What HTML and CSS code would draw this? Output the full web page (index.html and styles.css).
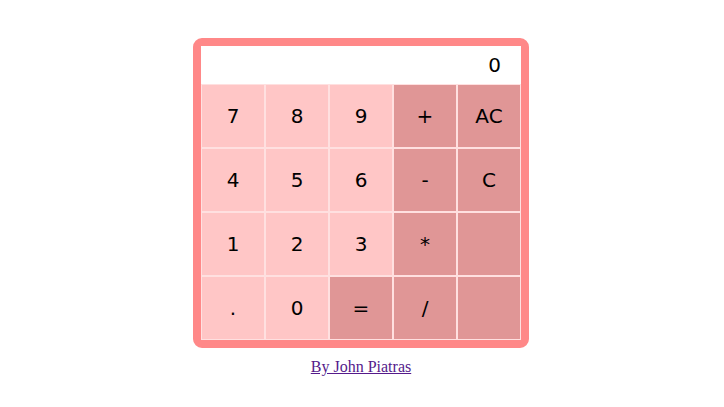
FILE: index.html
```html
<!DOCTYPE html>
<html>
<head>
<meta charset="utf-8">
<link rel="stylesheet" href="styles.css">
</head>
<body>
<div class="calc">
  <div class="display">0</div>
  <div class="keys">
    <div class="key">7</div>
    <div class="key">8</div>
    <div class="key">9</div>
    <div class="key op">+</div>
    <div class="key op">AC</div>
    <div class="key">4</div>
    <div class="key">5</div>
    <div class="key">6</div>
    <div class="key op">-</div>
    <div class="key op">C</div>
    <div class="key">1</div>
    <div class="key">2</div>
    <div class="key">3</div>
    <div class="key op">*</div>
    <div class="key op"></div>
    <div class="key">.</div>
    <div class="key">0</div>
    <div class="key op">=</div>
    <div class="key op">/</div>
    <div class="key op"></div>
  </div>
</div>
<div class="credit"><a href="#">By John Piatras</a></div>
</body>
</html>
```
FILE: styles.css
```css
body {
  margin: 8px 10px 8px 8px;
  font-family: "Liberation Serif", serif;
}
.calc {
  width: 320px;
  margin: 30px auto 0;
  border: 8px solid #ff8888;
  border-radius: 9px;
  background: #ff8888;
}
.display {
  height: 38px;
  background: #fff;
  font-family: "DejaVu Sans", sans-serif;
  font-size: 20px;
  line-height: 38px;
  text-align: right;
  padding-right: 20px;
  box-sizing: border-box;
  color: #000;
}
.keys {
  display: grid;
  grid-template-columns: repeat(5, 64px);
  grid-auto-rows: 64px;
}
.key {
  box-sizing: border-box;
  border: 1px solid #ffe0e0;
  background: #ffc6c6;
  display: flex;
  align-items: center;
  justify-content: center;
  font-family: "DejaVu Sans", sans-serif;
  font-size: 20px;
  color: #000;
}
.key.op {
  background: #e09696;
}
.credit {
  text-align: center;
  margin-top: 10px;
  font-size: 16px;
}
.credit a {
  color: #551a8b;
}
```
